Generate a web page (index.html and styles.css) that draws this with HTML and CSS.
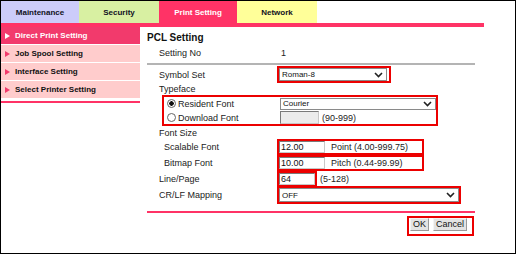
FILE: index.html
```html
<!DOCTYPE html>
<html lang="en">
<head>
    <meta charset="UTF-8">
    <title>PCL Setting</title>
    <link rel="stylesheet" href="styles.css">
</head>
<body>
    <div class="frame">
        <div class="tabs">
            <div class="tab tab-maint">Maintenance</div>
            <div class="tab tab-security">Security</div>
            <div class="tab tab-print">Print Setting</div>
            <div class="tab tab-network">Network</div>
        </div>
        <div class="tab-line"></div>

        <div class="layout">
            <div class="side">
                <div class="menu-item active"><span class="arrow"></span>Direct Print Setting</div>
                <div class="menu-item"><span class="arrow"></span>Job Spool Setting</div>
                <div class="menu-item"><span class="arrow"></span>Interface Setting</div>
                <div class="menu-item"><span class="arrow"></span>Select Printer Setting</div>
                <div class="side-line"></div>
            </div>

            <div class="main">
                <div class="title">PCL Setting</div>
                <div class="row row-setno">
                    <span class="label">Setting No</span>
                    <span class="value">1</span>
                </div>
                <div class="rule"></div>

                <div class="row row-symbol">
                    <span class="label">Symbol Set</span>
                    <span class="mark mark-symbol">
                        <span class="select select-symbol">Roman-8
                            <svg width="9" height="6" viewBox="0 0 9 6"><path d="M1 1 L4.5 4.5 L8 1" fill="none" stroke="#222" stroke-width="1.6"/></svg>
                        </span>
                    </span>
                </div>

                <div class="row row-typeface">
                    <span class="label">Typeface</span>
                </div>
                <div class="mark typeface-box">
                    <div class="sub-row sub-resident">
                        <label class="radio-label"><input type="radio" name="tf" checked>Resident Font</label>
                        <span class="select select-courier">Courier
                            <svg width="9" height="6" viewBox="0 0 9 6"><path d="M1 1 L4.5 4.5 L8 1" fill="none" stroke="#222" stroke-width="1.6"/></svg>
                        </span>
                    </div>
                    <div class="sub-row sub-download">
                        <label class="radio-label"><input type="radio" name="tf">Download Font</label>
                        <input type="text" class="field field-download" disabled>
                        <span class="hint">(90-999)</span>
                    </div>
                </div>

                <div class="row row-fontsize">
                    <span class="label">Font Size</span>
                </div>
                <div class="row row-size">
                    <span class="label label-sub">Scalable Font</span>
                    <span class="mark mark-size">
                        <input type="text" class="field field-size" value="12.00">
                        <span class="hint hint-size">Point (4.00-999.75)</span>
                    </span>
                </div>
                <div class="row row-size">
                    <span class="label label-sub">Bitmap Font</span>
                    <span class="mark mark-size">
                        <input type="text" class="field field-size" value="10.00">
                        <span class="hint hint-size">Pitch (0.44-99.99)</span>
                    </span>
                </div>

                <div class="row row-line">
                    <span class="label">Line/Page</span>
                    <span class="mark mark-line">
                        <input type="text" class="field field-line" value="64">
                    </span>
                    <span class="hint">(5-128)</span>
                </div>

                <div class="row row-crlf">
                    <span class="label">CR/LF Mapping</span>
                    <span class="mark mark-crlf">
                        <span class="select select-crlf">OFF
                            <svg width="9" height="6" viewBox="0 0 9 6"><path d="M1 1 L4.5 4.5 L8 1" fill="none" stroke="#222" stroke-width="1.6"/></svg>
                        </span>
                    </span>
                </div>

                <div class="pink-line"></div>

                <div class="actions">
                    <span class="mark mark-buttons">
                        <button class="btn">OK</button>
                        <button class="btn">Cancel</button>
                    </span>
                </div>
            </div>
        </div>
    </div>
</body>
</html>
```

FILE: styles.css
```css
body {
    margin: 0;
    font-family: "Liberation Sans", Arial, sans-serif;
    font-size: 9px;
    color: #222;
    background: #fff;
}

.frame {
    width: 514px;
    height: 252px;
    border: 1px solid #000;
}

/* top tabs */
.tabs {
    display: flex;
    height: 22px;
}
.tab {
    display: flex;
    align-items: center;
    justify-content: center;
    font-weight: bold;
    font-size: 8px;
    color: #111122;
}
.tab-maint {
    width: 78px;
    background-color: #ccccfa;
}
.tab-security {
    width: 80px;
    background-color: #d8f0a2;
}
.tab-print {
    width: 78px;
    background-color: #ff3366;
    color: #fff;
}
.tab-network {
    width: 80px;
    background-color: #ffff99;
}
.tab-line {
    width: 483px;
    height: 4px;
    background-color: #ff3366;
}

.layout {
    display: flex;
}

/* left menu */
.side {
    width: 139px;
}
.menu-item {
    display: flex;
    align-items: center;
    height: 17px;
    border-bottom: 1px solid #fff;
    background-color: #ffcccc;
    font-weight: bold;
    font-size: 8px;
    color: #111;
}
.menu-item.active {
    background-color: #f23a6c;
    color: #fff;
}
.arrow {
    width: 0;
    height: 0;
    margin: 0 5px 0 4px;
    border-left: 5px solid #f23a6c;
    border-top: 3px solid transparent;
    border-bottom: 3px solid transparent;
}
.menu-item.active .arrow {
    border-left-color: #fff;
}
.side-line {
    height: 2px;
    margin-top: 2px;
    background-color: #ff3366;
}

/* main panel */
.main {
    width: 328px;
    margin-left: 7px;
    padding-top: 4px;
    display: flex;
    flex-direction: column;
}
.title {
    height: 14px;
    line-height: 14px;
    font-weight: bold;
    font-size: 10px;
    color: #111;
}
.row {
    display: flex;
    align-items: center;
    padding-left: 12px;
}
.label {
    width: 118px;
    flex-shrink: 0;
}
.label-sub {
    padding-left: 5px;
    width: 113px;
}
.value {
    padding-left: 4px;
}
.row-setno {
    height: 15px;
}
.rule {
    height: 2px;
    margin-top: 3px;
    background-color: #b4b4b4;
}
.row-symbol {
    margin-top: 1px;
    height: 17px;
}
.row-typeface {
    height: 12px;
}
.row-fontsize {
    height: 13px;
}
.row-size {
    height: 16px;
}
.row-line {
    height: 15px;
}
.row-crlf {
    height: 18px;
}

/* red annotation frames */
.mark {
    display: inline-flex;
    align-items: center;
    box-sizing: border-box;
    border: 2px solid #ec0000;
}
.mark-symbol {
    width: 114px;
    height: 17px;
}
.mark-size {
    width: 147px;
    height: 16px;
}
.mark-line {
    width: 40px;
    height: 15px;
}
.mark-crlf {
    width: 184px;
    height: 18px;
}

/* fake selects */
.select {
    display: flex;
    align-items: center;
    justify-content: space-between;
    box-sizing: border-box;
    padding: 0 3px 0 2px;
    background: #fff;
    border: 1px solid #8a8a8a;
    font-size: 8px;
    color: #111;
}
.select-symbol {
    width: 108px;
    height: 13px;
}
.select-courier {
    width: 156px;
    height: 12px;
}
.select-crlf {
    width: 180px;
    height: 14px;
}

/* typeface group */
.typeface-box {
    display: block;
    width: 276px;
    height: 31px;
    margin-left: 15px;
}
.sub-row {
    display: flex;
    align-items: center;
    padding-left: 3px;
}
.sub-resident {
    height: 13px;
}
.sub-download {
    height: 15px;
}
.radio-label {
    display: flex;
    align-items: center;
    width: 113px;
    flex-shrink: 0;
}
.radio-label input {
    appearance: none;
    width: 9px;
    height: 9px;
    margin: 0 2px 0 0;
    border: 1px solid #666;
    border-radius: 50%;
    background: #fff;
    box-sizing: border-box;
}
.radio-label input:checked {
    background: radial-gradient(circle, #111 0 2px, #fff 2.5px);
}

/* text fields */
.field {
    box-sizing: border-box;
    margin: 0;
    padding: 0 1px;
    height: 12px;
    border: 1px solid #7a7a7a;
    border-right-color: #c8c8c8;
    border-bottom-color: #c8c8c8;
    font-family: inherit;
    font-size: 9px;
    color: #111;
}
.field-download {
    width: 39px;
    height: 13px;
    background-color: #ececec;
    margin-right: 3px;
}
.field-size {
    width: 46px;
    margin-left: 0;
}
.hint-size {
    margin-left: 6px;
}
.field-line {
    width: 36px;
}
.row-line .hint {
    margin-left: 3px;
}

.pink-line {
    height: 2px;
    margin-top: 7px;
    background-color: #ff3366;
}

/* buttons */
.actions {
    display: flex;
    justify-content: flex-end;
    margin-top: 3px;
    padding-right: 1px;
}
.mark-buttons {
    align-items: flex-start;
    gap: 4px;
    padding: 0 5px 3px 1px;
    height: 20px;
}
.btn {
    margin: 0;
    padding: 0 2px;
    height: 13px;
    font-family: inherit;
    font-size: 9px;
    color: #111;
    background-color: #e3e3e3;
    border: 1px solid #9a9a9a;
    border-top-color: #f4f4f4;
    border-left-color: #f4f4f4;
    line-height: 11px;
}
```
